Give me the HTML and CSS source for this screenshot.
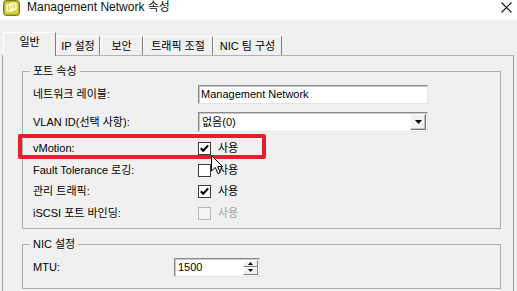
FILE: index.html
```html
<!DOCTYPE html>
<html lang="ko">
<head>
<meta charset="utf-8">
<title>Management Network 속성</title>
<link rel="stylesheet" href="styles.css">
</head>
<body>
<div class="titlebar">
  <svg class="app-icon" width="17" height="16" viewBox="0 0 17 16">
    <rect x="0.5" y="0.5" width="16" height="15" rx="3" fill="#b9b52c" stroke="#6f7a1a"/>
    <rect x="2" y="2" width="13" height="12" rx="2" fill="#d8cf3c"/>
    <rect x="4" y="5" width="6" height="6" rx="1" fill="none" stroke="#fffbe0" stroke-width="1.6"/>
    <rect x="7" y="3.5" width="6" height="6" rx="1" fill="none" stroke="#fffbe0" stroke-width="1.6"/>
  </svg>
  <span class="title">Management Network 속성</span>
  <svg class="close" width="11" height="11" viewBox="0 0 11 11">
    <path d="M0.5 0.5 L10.5 10.5 M10.5 0.5 L0.5 10.5" stroke="#111" stroke-width="1.1" fill="none"/>
  </svg>
</div>

<div class="tabs">
  <div class="tab active t1">일반</div>
  <div class="tab t2">IP 설정</div>
  <div class="tab t3">보안</div>
  <div class="tab t4">트래픽 조절</div>
  <div class="tab t5">NIC 팀 구성</div>
</div>

<div class="panel">
  <fieldset class="group g1">
    <legend>포트 속성</legend>
    <div class="row field">
      <span class="label">네트워크 레이블:</span>
      <div class="textbox">Management Network</div>
    </div>
    <div class="row field">
      <span class="label">VLAN ID(선택 사항):</span>
      <div class="combo">
        <span class="combo-text">없음(0)</span>
        <span class="combo-btn">
          <svg width="7" height="4" viewBox="0 0 7 4"><path d="M0 0 H7 L3.5 4 Z" fill="#000"/></svg>
        </span>
      </div>
    </div>
    <div class="checks">
      <div class="row check">
        <span class="label">vMotion:</span>
        <svg class="cb" width="13" height="13" viewBox="0 0 13 13"><rect x="0.5" y="0.5" width="12" height="12" fill="#fff" stroke="#3a3a3a"/><path d="M2.8 6.2 L5.2 8.8 L10.2 3.4" fill="none" stroke="#000" stroke-width="2.1"/></svg>
        <span class="cb-text">사용</span>
      </div>
      <div class="row check">
        <span class="label">Fault Tolerance 로깅:</span>
        <svg class="cb" width="13" height="13" viewBox="0 0 13 13"><rect x="0.5" y="0.5" width="12" height="12" fill="#fff" stroke="#3a3a3a"/></svg>
        <span class="cb-text">사용</span>
      </div>
      <div class="row check">
        <span class="label">관리 트래픽:</span>
        <svg class="cb" width="13" height="13" viewBox="0 0 13 13"><rect x="0.5" y="0.5" width="12" height="12" fill="#fff" stroke="#3a3a3a"/><path d="M2.8 6.2 L5.2 8.8 L10.2 3.4" fill="none" stroke="#000" stroke-width="2.1"/></svg>
        <span class="cb-text">사용</span>
      </div>
      <div class="row check">
        <span class="label">iSCSI 포트 바인딩:</span>
        <svg class="cb" width="13" height="13" viewBox="0 0 13 13"><rect x="0.5" y="0.5" width="12" height="12" fill="#f4f4f4" stroke="#b8b8b8"/></svg>
        <span class="cb-text disabled">사용</span>
      </div>
    </div>
  </fieldset>

  <fieldset class="group g2">
    <legend>NIC 설정</legend>
    <div class="row mtu">
      <span class="label mtu-label">MTU:</span>
      <div class="spinner">
        <span class="spin-text">1500</span>
        <span class="spin-btns">
          <span class="spin-btn"><svg width="5" height="3" viewBox="0 0 5 3"><path d="M0 3 H5 L2.5 0 Z" fill="#000"/></svg></span>
          <span class="spin-btn"><svg width="5" height="3" viewBox="0 0 5 3"><path d="M0 0 H5 L2.5 3 Z" fill="#000"/></svg></span>
        </span>
      </div>
    </div>
  </fieldset>
</div>

<div class="highlight"></div>
<svg class="cursor" width="13" height="20" viewBox="0 0 13 20">
  <path d="M0.5 0.5 L0.5 16 L4.3 12.4 L7 18.6 L9.3 17.6 L6.7 11.6 L11.6 11.6 Z" fill="#fff" stroke="#000" stroke-width="1"/>
</svg>
</body>
</html>
```

FILE: styles.css
```css
html, body {
  margin: 0;
  padding: 0;
}

body {
  width: 517px;
  height: 291px;
  overflow: hidden;
  position: relative;
  background: #f0f0f0;
  font-family: "Liberation Sans", "Noto Sans CJK KR", sans-serif;
  font-size: 11px;
  color: #000;
}

.titlebar {
  height: 20px;
  background: #fff;
  display: flex;
  align-items: flex-start;
}

.app-icon {
  margin: 0 0 0 3px;
}

.title {
  margin-left: 7px;
  font-size: 12px;
  line-height: 14px;
  color: #111;
}

.close {
  margin-left: auto;
  margin-right: 5px;
  margin-top: 2px;
}

.tabs {
  display: flex;
  align-items: flex-end;
  height: 23px;
  margin-top: 12px;
  padding-left: 3px;
  position: relative;
  z-index: 1;
}

.tab {
  box-sizing: border-box;
  height: 19px;
  display: flex;
  align-items: center;
  justify-content: center;
  line-height: 13px;
  padding-top: 1px;
  border-top: 1px solid #fbfbfb;
  border-left: 1px solid #fbfbfb;
  border-right: 1px solid #7e7e7e;
  white-space: nowrap;
}

.tab.active {
  height: 24px;
  margin-bottom: -1px;
  padding-top: 0;
  padding-bottom: 4px;
  background: #f0f0f0;
  border-top: 1px solid #ffffff;
  border-left: 1px solid #ffffff;
}

.t1 { width: 53px; }
.t2 { width: 44px; }
.t3 { width: 43px; }
.t4 { width: 70px; }
.t5 { width: 69px; }

.panel {
  box-sizing: border-box;
  margin-left: 2px;
  width: 512px;
  height: 240px;
  border-top: 1px solid #b2b2b2;
  border-left: 1px solid #a8a8a8;
  border-right: 1px solid #9a9a9a;
  padding-top: 8px;
}

.group {
  box-sizing: border-box;
  width: 479px;
  margin: 0 0 0 19px;
  border: 1px solid #acacac;
  padding: 2px 10px 4px 10px;
  min-width: 0;
}

.group legend {
  padding: 0 3px;
  margin-left: -3px;
  line-height: 14px;
  font-size: 11px;
}

.g2 {
  margin-top: 8px;
  padding: 6px 10px 11px 10px;
}

.row {
  display: flex;
  align-items: center;
}

.row.field {
  height: 28px;
}

.checks {
  margin-top: 2px;
}

.row.check {
  height: 21.5px;
}

.row.mtu {
  height: 20px;
}

.label {
  width: 165px;
  flex: none;
  line-height: 13px;
  white-space: nowrap;
}

.label.mtu-label {
  width: 141px;
}

.textbox {
  box-sizing: border-box;
  width: 230px;
  height: 19px;
  background: #fff;
  border-top: 1px solid #8a8a8a;
  border-left: 1px solid #8a8a8a;
  border-right: 1px solid #e3e3e3;
  border-bottom: 1px solid #e3e3e3;
  box-shadow: inset 1px 1px 0 #c8c8c8;
  padding-left: 2px;
  line-height: 17px;
  white-space: nowrap;
}

.combo {
  box-sizing: border-box;
  width: 230px;
  height: 20px;
  background: #fff;
  border-top: 1px solid #8a8a8a;
  border-left: 1px solid #8a8a8a;
  border-right: 1px solid #e3e3e3;
  border-bottom: 1px solid #e3e3e3;
  box-shadow: inset 1px 1px 0 #c8c8c8;
  display: flex;
  align-items: center;
  padding: 1px 1px 1px 3px;
}

.combo-text {
  flex: 1;
  line-height: 13px;
}

.combo-btn {
  box-sizing: border-box;
  width: 16px;
  height: 16px;
  display: flex;
  align-items: center;
  justify-content: center;
  background: #f2f2f2;
  border-top: 1px solid #fff;
  border-left: 1px solid #fff;
  border-right: 1px solid #6e6e6e;
  border-bottom: 1px solid #6e6e6e;
  box-shadow: inset -1px -1px 0 #c4c4c4;
}

.cb {
  flex: none;
  display: block;
}

.cb-text {
  margin-left: 7px;
  line-height: 13px;
}

.cb-text.disabled {
  color: #a3a3a3;
}

.spinner {
  box-sizing: border-box;
  width: 86px;
  height: 19px;
  background: #fff;
  border-top: 1px solid #8a8a8a;
  border-left: 1px solid #8a8a8a;
  border-right: 1px solid #e3e3e3;
  border-bottom: 1px solid #e3e3e3;
  box-shadow: inset 1px 1px 0 #c8c8c8;
  display: flex;
  align-items: stretch;
  padding: 1px 1px 1px 3px;
}

.spin-text {
  flex: 1;
  line-height: 15px;
}

.spin-btns {
  width: 15px;
  display: flex;
  flex-direction: column;
}

.spin-btn {
  box-sizing: border-box;
  flex: 1;
  display: flex;
  align-items: center;
  justify-content: center;
  background: #f2f2f2;
  border-top: 1px solid #fff;
  border-left: 1px solid #fff;
  border-right: 1px solid #7a7a7a;
  border-bottom: 1px solid #7a7a7a;
}

.highlight {
  position: absolute;
  left: 18px;
  top: 134px;
  width: 248px;
  height: 25px;
  box-sizing: border-box;
  border: 4px solid #e5202a;
  border-radius: 2px;
}

.cursor {
  position: absolute;
  left: 211px;
  top: 155px;
}
```
